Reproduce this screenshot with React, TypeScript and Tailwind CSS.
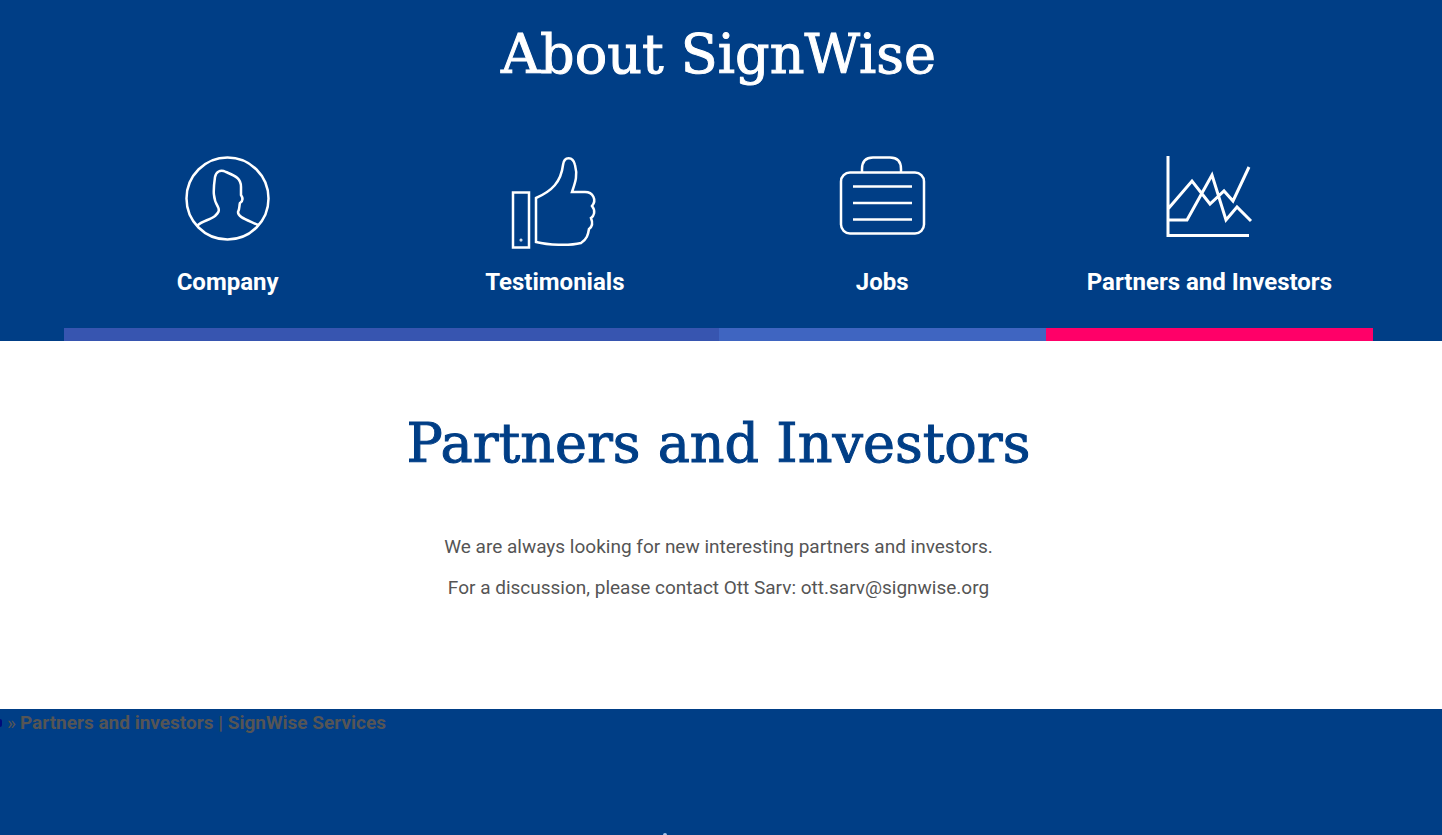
import type { ReactNode } from 'react';

type Tab = {
  label: string;
  bar: string;
  icon: ReactNode;
};

const tabs: Tab[] = [
  {
    label: 'Company',
    bar: 'bg-[#3755b0]',
    icon: (
      <>
        <circle cx="49.5" cy="42.5" r="41" />
        <path d="M19.5 69.5C24 65 32 64 37 60C40 57 42 55 40 51C35 43 35 35 37 21C38 16 42 13 48 16C57 20 63 22 63 31V39C65 42 65 45 62 47C61 50 62 52 60 56C60 61 67 63 80 69" />
      </>
    ),
  },
  {
    label: 'Testimonials',
    bar: 'bg-[#3755b0]',
    icon: (
      <>
        <rect x="8" y="36.5" width="16" height="55" />
        <circle cx="16" cy="84" r="0.5" strokeWidth="2" />
        <path d="M31 42C47 35 56 26 58 9C59 0 68 0 70 9C73 20 70 27 67 36H80C88 36 92 44 87 50C91 55 89 60 86 62C88 67 87 71 84 73C83 79 82 83 76 87C64 90 43 89 31 86Z" />
      </>
    ),
  },
  {
    label: 'Jobs',
    bar: 'bg-[#3f65c1]',
    icon: (
      <>
        <rect x="9" y="16.5" width="83" height="61" rx="9" />
        <path d="M30 16V13Q30 1.5 41 1.5H58Q69 1.5 69 13V16M21 30.5H80M21 47H80M21 63.5H80" />
      </>
    ),
  },
  {
    label: 'Partners and Investors',
    bar: 'bg-[#ff0068]',
    icon: (
      <path
        strokeWidth="3"
        d="M9 0V79.5H90M9 53L33 25L51 48L65 35L74 45L90 11M9 64H28L53 19L67 64L78 51L92 65"
      />
    ),
  },
];

function SectionTitle({ as: Heading, children }: { as: 'h1' | 'h2'; children: ReactNode }) {
  return (
    <Heading className="text-center font-['DejaVu_Serif',serif] text-[54px] leading-[62px] [-webkit-text-stroke:1px_currentColor]">
      {children}
    </Heading>
  );
}

export default function App() {
  return (
    <div className="flex min-h-screen flex-col overflow-x-hidden bg-[#003e86] font-['Roboto',sans-serif] text-[19px] text-[#555555]">
      <header className="pt-6 pr-[5px] text-white">
        <SectionTitle as="h1">About SignWise</SectionTitle>

        <nav className="mx-auto mt-[70px] grid w-full max-w-[1309px] grid-cols-4">
          {tabs.map((tab) => (
            <a key={tab.label} href="#" className="flex flex-col items-center">
              <svg
                viewBox="0 0 100 96"
                className="h-24 w-[100px] fill-none stroke-current"
                strokeWidth="2.5"
                aria-hidden="true"
              >
                {tab.icon}
              </svg>
              <span className="mt-3 text-2xl leading-9 font-bold">{tab.label}</span>
              <span className={`mt-7 h-[13px] w-full ${tab.bar}`} />
            </a>
          ))}
        </nav>
      </header>

      <main className="bg-white pt-[72px] pr-[5px] pb-[107px] text-center">
        <div className="text-[#003e86]">
          <SectionTitle as="h2">Partners and Investors</SectionTitle>
        </div>
        <p className="mt-[58px] leading-7">We are always looking for new interesting partners and investors.</p>
        <p className="mt-[13px] leading-7">For a discussion, please contact Ott Sarv: ott.sarv@signwise.org</p>
      </main>

      <footer className="flex flex-1 flex-col justify-between">
        <div className="flex items-center leading-7">
          <a href="#" aria-label="Home" className="h-2 w-[2px] rounded-r bg-[#000c7a]" />
          <span className="ml-[5px]">»</span>
          <strong className="ml-1">Partners and investors | SignWise Services</strong>
        </div>
        <svg viewBox="0 0 6 2" className="ml-[46%] h-[2px] w-[6px]" aria-hidden="true">
          <circle cx="2" cy="2" r="2" fill="#a9c8ee" />
        </svg>
      </footer>
    </div>
  );
}
